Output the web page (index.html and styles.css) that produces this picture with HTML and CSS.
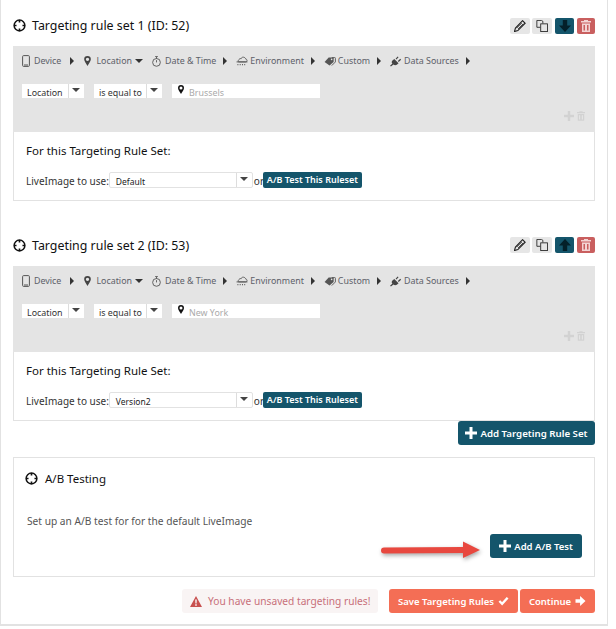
FILE: index.html
```html
<!doctype html>
<html lang="en">
  <head>
    <meta charset="UTF-8" />
    <title>Targeting Rules</title>
    <link rel="stylesheet" href="styles.css">
  </head>
  <body>
    <svg class="defs" width="0" height="0">
      <symbol id="i-target" viewBox="0 0 14 14">
        <circle cx="7" cy="7" r="5.8" fill="none" stroke="currentColor" stroke-width="1.600" />
        <path d="M7 1v2.800M7 10.200V13M1 7h2.800M10.200 7H13" stroke="currentColor" stroke-width="1.800" />
      </symbol>
      <symbol id="i-device" viewBox="0 0 8 12">
        <rect x=".6" y=".6" width="6.8" height="10.8" rx="1" fill="none" stroke="currentColor" stroke-width="1" />
        <path d="M2 10h4" stroke="currentColor" />
      </symbol>
      <symbol id="i-pin" viewBox="0 0 8 12">
        <path fill-rule="evenodd" d="M4 0a4 4 0 0 1 4 4c0 2.400-2.600 5.600-4 8-1.400-2.400-4-5.600-4-8a4 4 0 0 1 4-4zm0 2a2 2 0 1 0 0 4 2 2 0 0 0 0-4z" fill="currentColor" />
      </symbol>
      <symbol id="i-clock" viewBox="0 0 10 12">
        <circle cx="5" cy="7" r="4.300" fill="none" stroke="currentColor" />
        <path d="M3.500 .5h3M5 1v2M5 7V4.500" stroke="currentColor" />
      </symbol>
      <symbol id="i-cloud" viewBox="0 0 13 11">
        <path d="M3 6.500h7.500c2 0 2-3 .2-3C10 .8 6 .5 5.500 3 3.500 2 1 6.500 3 6.500zM.5 6.500h12" fill="none" stroke="currentColor" />
        <path d="M1.500 9.500h1M4 9.500h1M6.500 9.500h1M9 9.500h1" stroke="currentColor" stroke-width="1.400" />
      </symbol>
      <symbol id="i-tags" viewBox="0 0 13 10">
        <path d="M5 .5h4.500a1 1 0 0 1 1 1v4l-4.500 4L.5 5.500z" fill="currentColor" />
        <path d="M8.500 .5h3a1 1 0 0 1 1 1v4l-4 4" fill="none" stroke="currentColor" />
        <circle cx="8.300" cy="2.700" r=".9" fill="#e4e4e4" />
      </symbol>
      <symbol id="i-plug" viewBox="0 0 14 13">
        <path d="M5 3.500l5 5-2 1.800c-1.600 1-3 .6-4-.4L1 12.500 0 11.500 2.800 9C1.800 8 1.600 6.500 2.800 5.300zM6.500 3.200L9 .5l1 1-2.500 2.700zM9.200 6L12 3.300l1 1L10.200 7z" fill="currentColor" />
      </symbol>
      <symbol id="i-plus" viewBox="0 0 12 12">
        <path d="M4.500 0h3v4.500H12v3H7.500V12h-3V7.500H0v-3h4.500z" fill="currentColor" />
      </symbol>
      <symbol id="i-trash" viewBox="0 0 10 12">
        <path fill-rule="evenodd" d="M3 0h4v1h3v1.500H0V1h3zM1 3.500h8V12H1zm1.500 1.500v5.500H4V5zm3.500 0v5.500h1.500V5z" fill="currentColor" />
      </symbol>
      <symbol id="i-pencil" viewBox="0 0 14 14">
        <path d="M10 .8l3 3-8.500 8.500-4 1.200 1.200-4z" fill="none" stroke="currentColor" stroke-width="1.300" />
        <path d="M9 3.500l-6 6M10.800 4.500l-6 6" stroke="currentColor" />
      </symbol>
      <symbol id="i-copy" viewBox="0 0 14 14">
        <path d="M8 4V1.500L6.500.5H1v8h4" fill="none" stroke="currentColor" />
        <rect x="5.500" y="4.500" width="8" height="9" fill="none" stroke="currentColor" />
      </symbol>
      <symbol id="i-down" viewBox="0 0 12 12">
        <path d="M3.800 0h4.400v5.500H12L6 12 0 5.500h3.800z" fill="currentColor" />
      </symbol>
      <symbol id="i-up" viewBox="0 0 12 12">
        <path d="M3.800 12h4.400V6.500H12L6 0 0 6.500h3.800z" fill="currentColor" />
      </symbol>
      <symbol id="i-warn" viewBox="0 0 12 11">
        <path fill-rule="evenodd" d="M6 0l6 11H0zM5.200 3.500l.2 4h1.200l.2-4zM5.200 8.300v1.500h1.600V8.300z" fill="currentColor" />
      </symbol>
      <symbol id="i-check" viewBox="0 0 12 10">
        <path d="M1.500 5l3 3 6-6.500" fill="none" stroke="currentColor" stroke-width="2.600" />
      </symbol>
      <symbol id="i-right" viewBox="0 0 12 12">
        <path d="M0 3.800h5.500V0L12 6l-6.500 6V8.200H0z" fill="currentColor" />
      </symbol>
    </svg>

    <div class="page">
      <section class="rule-set">
        <div class="rule-head">
          <svg class="target"><use href="#i-target" /></svg>
          <h3>Targeting rule set 1 (ID: 52)</h3>
          <div class="tools">
            <span class="tool"><svg><use href="#i-pencil" /></svg></span>
            <span class="tool"><svg><use href="#i-copy" /></svg></span>
            <span class="tool tool-move"><svg><use href="#i-down" /></svg></span>
            <span class="tool tool-del"><svg><use href="#i-trash" /></svg></span>
          </div>
        </div>
        <div class="rule-box">
          <ul class="cats">
            <li><svg class="cat-device"><use href="#i-device" /></svg>Device<i class="caret-r"></i></li>
            <li><svg class="cat-pin"><use href="#i-pin" /></svg>Location<i class="caret-d"></i></li>
            <li><svg class="cat-clock"><use href="#i-clock" /></svg>Date &amp; Time<i class="caret-r"></i></li>
            <li><svg class="cat-cloud"><use href="#i-cloud" /></svg>Environment<i class="caret-r"></i></li>
            <li><svg class="cat-tags"><use href="#i-tags" /></svg>Custom<i class="caret-r"></i></li>
            <li><svg class="cat-plug"><use href="#i-plug" /></svg>Data Sources<i class="caret-r"></i></li>
          </ul>
          <div class="cond">
            <span class="pick pick-a">Location<b></b></span>
            <span class="pick pick-b">is equal to<b></b></span>
            <span class="place"><svg><use href="#i-pin" /></svg>Brussels</span>
          </div>
          <div class="cond-tools">
            <svg class="c-plus"><use href="#i-plus" /></svg>
            <svg class="c-trash"><use href="#i-trash" /></svg>
          </div>
        </div>
        <div class="rule-foot">
          <h4>For this Targeting Rule Set:</h4>
          <div class="use-row">
            <span class="use-label">LiveImage to use:</span>
            <span class="image-pick">Default<b></b></span>
            <span class="or">or</span>
            <span class="ab-btn">A/B Test This Ruleset</span>
          </div>
        </div>
      </section>

      <section class="rule-set second">
        <div class="rule-head">
          <svg class="target"><use href="#i-target" /></svg>
          <h3>Targeting rule set 2 (ID: 53)</h3>
          <div class="tools">
            <span class="tool"><svg><use href="#i-pencil" /></svg></span>
            <span class="tool"><svg><use href="#i-copy" /></svg></span>
            <span class="tool tool-move"><svg><use href="#i-up" /></svg></span>
            <span class="tool tool-del"><svg><use href="#i-trash" /></svg></span>
          </div>
        </div>
        <div class="rule-box">
          <ul class="cats">
            <li><svg class="cat-device"><use href="#i-device" /></svg>Device<i class="caret-r"></i></li>
            <li><svg class="cat-pin"><use href="#i-pin" /></svg>Location<i class="caret-d"></i></li>
            <li><svg class="cat-clock"><use href="#i-clock" /></svg>Date &amp; Time<i class="caret-r"></i></li>
            <li><svg class="cat-cloud"><use href="#i-cloud" /></svg>Environment<i class="caret-r"></i></li>
            <li><svg class="cat-tags"><use href="#i-tags" /></svg>Custom<i class="caret-r"></i></li>
            <li><svg class="cat-plug"><use href="#i-plug" /></svg>Data Sources<i class="caret-r"></i></li>
          </ul>
          <div class="cond">
            <span class="pick pick-a">Location<b></b></span>
            <span class="pick pick-b">is equal to<b></b></span>
            <span class="place"><svg><use href="#i-pin" /></svg>New York</span>
          </div>
          <div class="cond-tools">
            <svg class="c-plus"><use href="#i-plus" /></svg>
            <svg class="c-trash"><use href="#i-trash" /></svg>
          </div>
        </div>
        <div class="rule-foot">
          <h4>For this Targeting Rule Set:</h4>
          <div class="use-row">
            <span class="use-label">LiveImage to use:</span>
            <span class="image-pick">Version2<b></b></span>
            <span class="or">or</span>
            <span class="ab-btn">A/B Test This Ruleset</span>
          </div>
        </div>
      </section>

      <div class="add-row">
        <span class="btn btn-dark btn-set"><svg><use href="#i-plus" /></svg>Add Targeting Rule Set</span>
      </div>

      <section class="ab-card">
        <div class="ab-head">
          <svg class="target"><use href="#i-target" /></svg>
          <h3>A/B Testing</h3>
        </div>
        <p>Set up an A/B test for for the default LiveImage</p>
        <div class="ab-action">
          <span class="btn btn-dark btn-ab"><svg><use href="#i-plus" /></svg>Add A/B Test</span>
        </div>
        <svg class="arrow" viewBox="0 0 104 28">
          <path d="M3 10.500L82 10V4.500L99 13 82 21v-5L3 16.500a3 3 0 0 1 0-6z" />
        </svg>
      </section>

      <div class="footer">
        <span class="unsaved"><svg><use href="#i-warn" /></svg>You have unsaved targeting rules!</span>
        <span class="btn btn-coral btn-save">Save Targeting Rules<svg><use href="#i-check" /></svg></span>
        <span class="btn btn-coral btn-next">Continue<svg><use href="#i-right" /></svg></span>
      </div>
    </div>
  </body>
</html>
```

FILE: styles.css
```css
body {
  margin: 0;
  background: #fff;
  font-family: "Noto Sans", "Open Sans", sans-serif;
  color: #444;
}
.defs {
  position: absolute;
}
svg {
  display: block;
}
.page {
  box-sizing: border-box;
  width: 608px;
  height: 626px;
  padding: 0 11px 0 12px;
  border: 1px solid #e2e2e2;
  border-width: 0 1px 2px 1px;
}
h3,
h4,
p,
ul {
  margin: 0;
  padding: 0;
}
.rule-set {
  width: 582px;
}
.second {
  margin-top: 23px;
}
.rule-head {
  display: flex;
  align-items: center;
  height: 46px;
  padding-top: 5px;
  box-sizing: border-box;
}
.second .rule-head {
  height: 42px;
  padding-top: 0;
}
.target {
  width: 13px;
  height: 13px;
  color: #111;
}
.rule-head h3 {
  margin-left: 6px;
  font-size: 12.400px;
  font-weight: 400;
  color: #111;
}
.tools {
  display: flex;
  margin-left: auto;
}
.tool {
  display: flex;
  align-items: center;
  justify-content: center;
  width: 20px;
  height: 16px;
  margin-left: 2px;
  background: #e6e6e6;
  border-radius: 2px;
  color: #222;
}
.tool svg {
  width: 12px;
  height: 12px;
}
.tool-move {
  width: 19px;
  margin-left: 3px;
  background: #14556b;
  color: #04202a;
}
.tool-del {
  width: 18px;
  margin-left: 3px;
  background: #c95f5f;
  color: #f3d4d4;
}
.rule-box {
  height: 86px;
  background: #e4e4e4;
  padding: 8px 0 0 9px;
  box-sizing: border-box;
}
.cats {
  display: flex;
  list-style: none;
  height: 14px;
  font-size: 8.900px;
  line-height: 14px;
  color: #5c6068;
}
.cats li {
  display: flex;
  align-items: center;
  white-space: nowrap;
}
.cats svg {
  color: #555;
  margin-right: 1px;
}
.cats .cat-device {
  width: 8px;
  height: 12px;
  margin-right: 4px;
}
.cats .cat-pin {
  width: 7px;
  height: 10px;
  margin: 0 5px 0 1px;
  color: #444;
}
.cats .cat-clock {
  width: 9px;
  height: 11px;
  margin-right: 4px;
}
.cats .cat-cloud {
  width: 12px;
  height: 10px;
  margin-right: 2px;
}
.cats .cat-tags {
  width: 12px;
  height: 9px;
  margin-right: 2px;
}
.cats .cat-plug {
  width: 12px;
  height: 11px;
  margin-right: 2px;
  color: #444;
}
.caret-r {
  width: 0;
  height: 0;
  margin: 0 9px 0 7px;
  border-left: 4px solid #333;
  border-top: 4px solid transparent;
  border-bottom: 4px solid transparent;
}
.cats li:first-child .caret-r {
  margin-left: 9px;
}
.caret-d {
  width: 0;
  height: 0;
  margin: 0 9px 0 3px;
  border-top: 4px solid #333;
  border-left: 4px solid transparent;
  border-right: 4px solid transparent;
}
.cond {
  display: flex;
  margin-top: 16px;
  font-size: 8.900px;
  line-height: 17px;
  color: #333;
}
.pick {
  position: relative;
  display: block;
  height: 14px;
  background: #fff;
  padding-left: 5px;
  box-sizing: border-box;
}
.pick b {
  position: absolute;
  top: 0;
  right: 0;
  height: 14px;
  width: 16px;
  border-left: 1px solid #ddd;
  box-sizing: border-box;
}
.pick b::after,
.image-pick b::after {
  content: "";
  position: absolute;
  top: 4px;
  left: 3px;
  border-top: 4px solid #444;
  border-left: 4px solid transparent;
  border-right: 4px solid transparent;
}
.pick-a {
  width: 62px;
}
.pick-b {
  width: 68px;
  margin-left: 10px;
}
.place {
  display: flex;
  width: 148px;
  height: 14px;
  margin-left: 10px;
  background: #fff;
  color: #aaa;
  box-sizing: border-box;
  padding-left: 6px;
}
.place svg {
  width: 6px;
  height: 9px;
  margin: 1px 5px 0 0;
  color: #111;
}
.cond-tools {
  display: flex;
  justify-content: flex-end;
  gap: 3px;
  margin: 13px 10px 0 0;
  color: #d2d2d2;
}
.c-plus {
  width: 10px;
  height: 10px;
}
.c-trash {
  width: 8px;
  height: 10px;
}
.rule-foot {
  height: 69px;
  border: 1px solid #e2e2e2;
  border-width: 0 1px 1px 1px;
  box-sizing: border-box;
  padding: 11px 0 0 12px;
}
.rule-foot h4 {
  font-size: 11.500px;
  font-weight: 400;
  line-height: 16px;
  color: #111;
}
.use-row {
  display: flex;
  align-items: center;
  margin-top: 13px;
  height: 16px;
  font-size: 10px;
  color: #333;
  white-space: nowrap;
}
.use-label {
  margin-top: 2px;
}
.image-pick {
  position: relative;
  box-sizing: border-box;
  width: 144px;
  height: 16px;
  padding-left: 6px;
  border: 1px solid #e2e2e2;
  border-radius: 2px;
  font-size: 8.500px;
  line-height: 17px;
  color: #222;
}
.image-pick b {
  position: absolute;
  top: 0;
  right: 0;
  width: 15px;
  height: 14px;
  border-left: 1px solid #ddd;
}
.or {
  margin: 2px 0 0 1px;
  width: 9px;
}
.ab-btn {
  box-sizing: border-box;
  width: 99px;
  height: 16px;
  background: #14556b;
  border-radius: 2px;
  color: #fff;
  font-size: 9px;
  font-weight: 600;
  line-height: 16px;
  text-align: center;
}
.add-row {
  display: flex;
  justify-content: flex-end;
  width: 582px;
}
.btn {
  display: inline-flex;
  align-items: center;
  justify-content: center;
  box-sizing: border-box;
  height: 24px;
  border-radius: 3px;
  color: #fff;
  font-size: 9.500px;
  font-weight: 600;
  white-space: nowrap;
}
.btn-dark {
  background: #14556b;
}
.btn-dark svg {
  width: 12px;
  height: 12px;
  margin-right: 3px;
}
.btn-set {
  width: 137px;
  font-size: 9.700px;
}
.btn-ab {
  width: 92px;
}
.ab-card {
  position: relative;
  box-sizing: border-box;
  width: 582px;
  height: 120px;
  margin-top: 12px;
  border: 1px solid #e2e2e2;
}
.ab-head {
  display: flex;
  align-items: center;
  margin: 13px 0 0 11px;
  height: 14px;
}
.ab-head h3 {
  margin-left: 7px;
  font-size: 11.500px;
  font-weight: 400;
  color: #111;
}
.ab-card p {
  margin: 29px 0 0 13px;
  font-size: 10.200px;
  line-height: 14px;
  color: #555;
}
.ab-action {
  display: flex;
  justify-content: flex-end;
  margin: 6px 12px 0 0;
}
.arrow {
  position: absolute;
  left: 367px;
  top: 79px;
  width: 104px;
  height: 28px;
  fill: #e8483f;
  filter: drop-shadow(1px 2px 2px rgba(0, 0, 0, 0.35));
}
.footer {
  display: flex;
  justify-content: flex-end;
  align-items: center;
  gap: 2px;
  width: 582px;
  margin-top: 12px;
}
.unsaved {
  display: flex;
  align-items: center;
  box-sizing: border-box;
  width: 196px;
  height: 24px;
  margin-right: 9px;
  padding-left: 8px;
  background: #f9f4f4;
  border-radius: 3px;
  color: #c8707a;
  font-size: 10.200px;
  white-space: nowrap;
}
.unsaved svg {
  width: 12px;
  height: 11px;
  margin-right: 6px;
  color: #c8504f;
}
.btn-coral {
  background: #f46e55;
}
.btn-coral svg {
  width: 11px;
  height: 10px;
  margin-left: 4px;
}
.btn-save {
  width: 129px;
}
.btn-next {
  width: 75px;
}
```
